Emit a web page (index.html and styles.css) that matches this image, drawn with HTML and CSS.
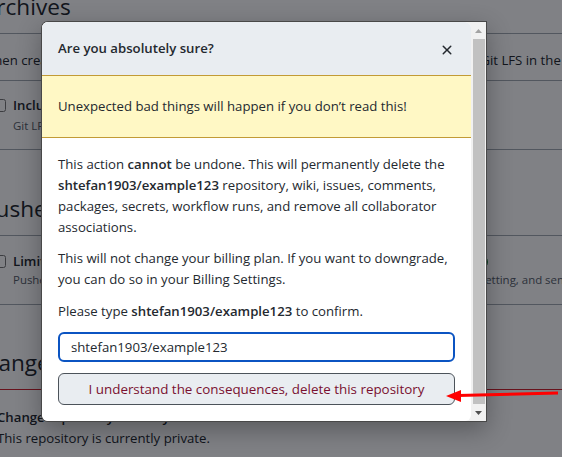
FILE: index.html
```html
<!DOCTYPE html>
<html lang="en">
<head>
<meta charset="utf-8">
<title>Delete repository</title>
<link rel="stylesheet" href="styles.css">
</head>
<body>
<main class="page">
  <section class="section">
    <h2 class="subhead">Archives</h2>
    <p class="lead">When creating source code archives, you can choose to include files stored using Git LFS in the archive.</p>
    <div class="box">
      <div class="check">
        <input type="checkbox" id="lfs">
        <label class="check-label" for="lfs">Include Git LFS objects in archives</label>
        <p class="note">Git LFS usage in archives is billed at the same rate as usage with the client.</p>
      </div>
    </div>
  </section>
  <section class="section pushes">
    <h2 class="subhead">Pushes</h2>
    <div class="push-row">
      <div class="check check-tight">
        <input type="checkbox" id="limit">
        <label class="check-label" for="limit">Limit how many branches and tags can be updated in a single push <span class="label-beta">Beta</span></label>
        <p class="note">Pushes will be rejected if they attempt to update more than this. Learn more about this setting, and send us your feedback.</p>
      </div>
    </div>
  </section>
  <section class="section danger">
    <h2 class="subhead subhead-danger">Danger Zone</h2>
    <div class="danger-item">
      <strong class="danger-title">Change repository visibility</strong>
      <p class="danger-text">This repository is currently private.</p>
    </div>
  </section>
</main>

<div class="overlay"></div>

<div class="dialog" role="dialog" aria-labelledby="dlg-title">
  <div class="dialog-content">
    <header class="dialog-header">
      <h1 class="dialog-title" id="dlg-title">Are you absolutely sure?</h1>
      <button class="close" type="button" aria-label="Close dialog">
        <svg viewBox="0 0 16 16" width="16" height="16" aria-hidden="true"><path fill="currentColor" d="M3.72 3.72a.75.75 0 0 1 1.06 0L8 6.94l3.22-3.22a.75.75 0 1 1 1.06 1.06L9.06 8l3.22 3.22a.75.75 0 1 1-1.06 1.06L8 9.06l-3.22 3.22a.75.75 0 0 1-1.06-1.06L6.94 8 3.72 4.78a.75.75 0 0 1 0-1.06z"/></svg>
      </button>
    </header>
    <div class="flash">Unexpected bad things will happen if you don’t read this!</div>
    <div class="dialog-body">
      <p class="para">This action <strong>cannot</strong> be undone. This will permanently delete the <strong>shtefan1903/example123</strong> repository, wiki, issues, comments, packages, secrets, workflow runs, and remove all collaborator associations.</p>
      <p class="para para-billing">This will not change your billing plan. If you want to downgrade, you can do so in your Billing Settings.</p>
      <p class="para">Please type <strong>shtefan1903/example123</strong> to confirm.</p>
      <input class="confirm-input" type="text" value="shtefan1903/example123" aria-label="Repository name">
      <button class="btn-danger" type="button">I understand the consequences, delete this repository</button>
    </div>
  </div>
  <div class="scrollbar" aria-hidden="true">
    <span class="sb-btn"><svg width="7" height="4" viewBox="0 0 7 4"><path d="M0 4 3.5 0 7 4z" fill="#a3a3a3"/></svg></span>
    <span class="track"><span class="thumb"></span></span>
    <span class="sb-btn"><svg width="7" height="4" viewBox="0 0 7 4"><path d="M0 0h7L3.5 4z" fill="#505050"/></svg></span>
  </div>
</div>

<svg class="annotation" width="562" height="457" viewBox="0 0 562 457" aria-hidden="true">
  <line x1="558" y1="393" x2="458" y2="395.4" stroke="#ff0000" stroke-width="3"/>
  <polygon points="446,396 461,390 461,402" fill="#ff0000"/>
</svg>
</body>
</html>
```

FILE: styles.css
```css
html, body {
  margin: 0;
  padding: 0;
}

body {
  width: 562px;
  height: 457px;
  overflow: hidden;
  background: #ffffff;
  color: #24292f;
  font-family: "Open Sans", "Noto Sans", sans-serif;
  font-size: 13.2px;
  line-height: 21px;
}

/* ---------- page behind the dialog ---------- */
.page {
  width: 1000px;
  margin: -8px 0 0 -18px;
}

.subhead {
  margin: 0;
  padding-bottom: 11px;
  font-size: 22.6px;
  font-weight: 400;
  line-height: 30px;
  border-bottom: 1px solid #a3aab2;
}

.lead {
  margin: 16px 0 9px;
}

.box {
  border: 1px solid #a3aab2;
  border-radius: 6px;
  padding: 14px 16px 13px 10px;
}

.check {
  display: grid;
  grid-template-columns: 13px auto;
  column-gap: 7px;
}

.check input {
  grid-row: 1;
  grid-column: 1;
  align-self: center;
  width: 13px;
  height: 13px;
  margin: 0;
}

.check-label {
  grid-row: 1;
  grid-column: 2;
  font-weight: 600;
}

.note {
  grid-column: 2;
  margin: 0;
  font-size: 11.45px;
  line-height: 20px;
  color: #57606a;
  white-space: nowrap;
}

.pushes {
  margin-top: 44px;
}

.push-row {
  padding: 15px 0 15px 11px;
  border-bottom: 1px solid #a3aab2;
}

.check-tight .check-label {
  line-height: 20px;
}

.check-tight .note {
  line-height: 18px;
}

.label-beta {
  display: inline-block;
  margin-left: 4px;
  padding: 0 7px;
  border: 1px solid #1a7f37;
  border-radius: 2em;
  color: #1a7f37;
  font-size: 12px;
  font-weight: 500;
  line-height: 14px;
}

.danger {
  margin-top: 43px;
}

.subhead-danger {
  border-bottom-color: #cf222e;
}

.danger-item {
  padding: 17px 16px 0 15px;
}

.danger-title {
  display: block;
  font-weight: 600;
}

.danger-text {
  margin: 0;
}

/* ---------- modal ---------- */
.overlay {
  position: fixed;
  inset: 0;
  background: rgba(1, 3, 11, 0.5);
}

.dialog {
  position: fixed;
  left: 41px;
  top: 21px;
  display: flex;
  border: 1px solid rgba(0, 0, 0, 0.7);
  border-radius: 7px 0 0 7px;
  background: #f1f1f1;
  box-shadow: 0 8px 24px rgba(0, 0, 0, 0.3);
}

.dialog-content {
  width: 429px;
  background: #ffffff;
  border-radius: 6px;
  overflow: hidden;
}

.dialog-header {
  display: flex;
  justify-content: space-between;
  align-items: flex-start;
  padding: 16px;
  background: #e9edf1;
}

.dialog-title {
  margin: 0;
  font-size: 13.2px;
  font-weight: 600;
  line-height: 21px;
}

.close {
  display: block;
  width: 16px;
  height: 16px;
  margin-top: 4px;
  padding: 0;
  border: 0;
  background: none;
  color: #24292f;
}

.close svg {
  display: block;
}

.flash {
  padding: 20px 16px;
  background: #fff8c5;
  border-top: 1px solid #c29b36;
  border-bottom: 1px solid #c29b36;
}

.dialog-body {
  padding: 16px;
}

.para {
  margin: 0 0 10px;
}

.para strong {
  font-weight: 600;
}

.para-billing {
  margin-bottom: 11px;
}

.confirm-input {
  display: block;
  box-sizing: border-box;
  width: 100%;
  height: 30px;
  margin: 0;
  padding: 0 11px;
  border: 2px solid #0b54c2;
  border-radius: 6px;
  outline: none;
  background: #ffffff;
  color: #24292f;
  font: inherit;
}

.btn-danger {
  display: block;
  box-sizing: border-box;
  width: 100%;
  height: 32px;
  margin-top: 11px;
  padding: 0 16px;
  border: 1px solid #4c535a;
  border-radius: 6px;
  background: #e9edf1;
  color: #7a1030;
  font-family: "Open Sans", "Noto Sans", sans-serif;
  font-size: 13.4px;
  font-weight: 500;
  line-height: 20px;
}

.scrollbar {
  width: 15px;
  display: flex;
  flex-direction: column;
  background: #f1f1f1;
}

.sb-btn {
  height: 17px;
  display: flex;
  align-items: center;
  justify-content: center;
}

.track {
  flex: 1;
  display: flex;
  padding: 0 1px 0 2px;
}

.thumb {
  flex: 1;
  background: #c1c1c1;
}

.annotation {
  position: fixed;
  left: 0;
  top: 0;
  pointer-events: none;
}
```
